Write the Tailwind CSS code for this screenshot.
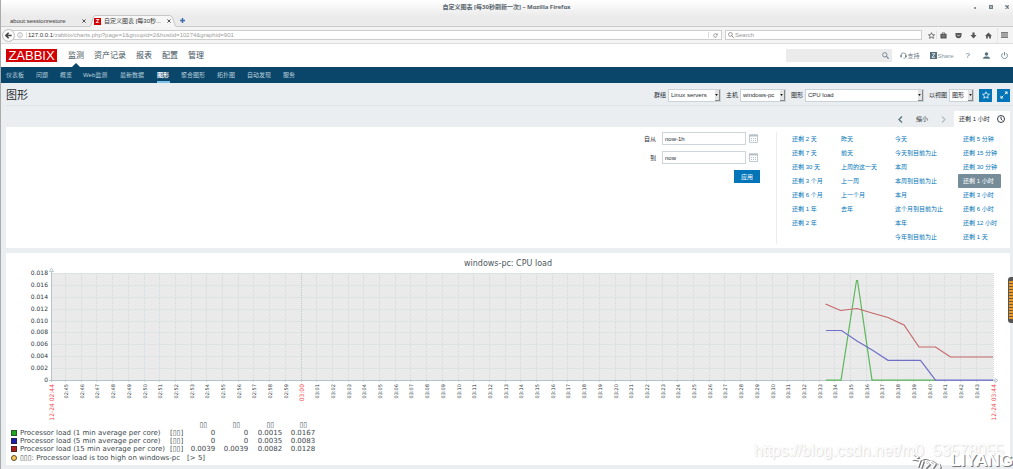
<!DOCTYPE html>
<html lang="zh-CN">
<head>
<meta charset="utf-8">
<title>自定义图表 [每30秒刷新一次]</title>
<script src="https://cdn.jsdelivr.net/npm/@tailwindcss/browser@4"></script>
</head>
<body class="relative min-h-screen overflow-x-hidden border-l border-[#a9abad] bg-[#ebeef0] font-['Liberation_Sans','Noto_Sans_CJK_SC',sans-serif] text-[6px] leading-[8px] text-[#1f2c33]">

<!-- Browser window -->
<div class="-ml-px">
  <div class="bg-linear-to-b from-white to-[#ebebeb] to-60%">
    <div class="relative flex h-[14px] items-center justify-center">
      <h2 class="font-['Noto_Sans','Noto_Sans_CJK_SC',sans-serif] text-[6px] font-bold text-[#56646c]">自定义图表 [每30秒刷新一次] – Mozilla Firefox</h2>
      <div class="absolute right-[4px] top-[5px] flex items-center gap-[12px]">
        <button aria-label="最小化" class="flex size-[4px] items-end"><span class="ml-[1px] h-[2px] w-[2px] bg-[#8b979d]"></span></button>
        <button aria-label="最大化" class="size-[4px] border border-[#6f7e85] bg-[#a9b3b8]"></button>
        <button aria-label="关闭" class="size-[4px]"><svg viewBox="0 0 4 4" class="size-[4px]"><path d="M.4.4 3.6 3.6M3.6.4.4 3.6" stroke="#65747c" stroke-width="1.3"/></svg></button>
      </div>
    </div>
    <div class="flex h-[13px] items-end border-b border-[#cbcbcb] text-[#3a3a3a]">
      <div class="flex h-[10px] w-[89px] items-center justify-between pl-[10px] pr-[3px]">
        <span>about:sessionrestore</span>
        <button aria-label="关闭标签页" class="size-[4px]"><svg viewBox="0 0 4 4" class="size-[4px]"><path d="M.4.4 3.6 3.6M3.6.4.4 3.6" stroke="#555" stroke-width="1"/></svg></button>
      </div>
      <div class="relative -mb-px flex h-[12px] w-[88px] items-center gap-[3px] pl-[5px]">
        <svg viewBox="0 0 88 13" preserveAspectRatio="none" class="absolute inset-0 size-full" fill="none"><path d="M0 13C4 12 2 .5 7 .5H80C86 .5 84 12 88 13" fill="#f6f6f6" stroke="#c4c4c4"/></svg>
        <span class="relative flex size-[7px] items-center justify-center bg-[#d40000] text-[6px] font-bold leading-[6px] text-white">Z</span>
        <span class="relative">自定义图表 [每30秒...</span>
        <button aria-label="关闭标签页" class="relative ml-auto mr-[6px] size-[4px]"><svg viewBox="0 0 4 4" class="size-[4px]"><path d="M.4.4 3.6 3.6M3.6.4.4 3.6" stroke="#555" stroke-width="1"/></svg></button>
      </div>
      <button aria-label="新标签页" class="mb-[3px] ml-[3px] size-[5px]"><svg viewBox="0 0 5 5" class="size-[5px]"><path d="M2.5 0V5M0 2.5H5" stroke="#3d6bb0" stroke-width="1.5"/></svg></button>
    </div>
  </div>

  <div class="flex h-[17px] items-center border-b border-[#dcdcdc] bg-[#f4f4f4] pl-[2px] pr-[2px]">
    <button aria-label="后退" class="relative z-10 flex size-[13px] shrink-0 items-center justify-center rounded-full border border-[#bdbdbd] bg-[#fafafa]">
      <svg viewBox="0 0 8 8" class="size-[7px]" fill="none"><path d="M4.2.8 1 4 4.2 7.2M1 4H7.6" stroke="#444" stroke-width="1.8"/></svg>
    </button>
    <div class="-ml-[4px] flex h-[10px] flex-1 items-center border border-[#cdcdcd] bg-white pl-[5px]">
      <svg viewBox="0 0 8 8" class="size-[6px]" fill="none" stroke="#999"><circle cx="4" cy="4" r="3.3" stroke-width=".8"/><path d="M4 3.4V6M4 1.9V2.7" stroke-width=".9"/></svg>
      <span class="ml-[3px] h-[6px] w-px bg-[#dcdcdc]"></span>
      <span class="pl-[1px] text-[#a0a0a0]"><span class="text-[#333]">127.0.0.1</span>/zabbix/charts.php?page=1&amp;groupid=2&amp;hostid=10274&amp;graphid=901</span>
      <button aria-label="重新加载" class="ml-auto flex h-[6px] w-[13px] items-center justify-center border-l border-[#dcdcdc]"><svg viewBox="0 0 8 8" class="size-[5px]" fill="none"><path d="M6.5 5A2.8 2.8 0 1 1 6.2 2.4" stroke="#777" stroke-width="1.1"/><path d="M7.4.5V3.6H4.3z" fill="#777"/></svg></button>
    </div>
    <label class="ml-[3px] flex h-[10px] w-[197px] items-center border border-[#cdcdcd] bg-white pl-[2px]">
      <svg viewBox="0 0 8 8" class="size-[6px]" fill="none" stroke="#777"><circle cx="3.2" cy="3.2" r="2.5"/><path d="M5 5 7.6 7.6" stroke-width="1.2"/></svg>
      <input aria-label="Search" placeholder="Search" class="ml-[1px] h-[8px] flex-1 outline-none placeholder:text-[#999]">
    </label>
    <div class="flex items-center pl-[4px]">
      <button aria-label="收藏" class="flex h-[10px] w-[10px] items-center justify-center"><svg viewBox="0 0 16 16" class="size-[7px]" fill="none"><path d="M8 1.5 10 6 15 6.5 11.200 9.800 12.400 14.500 8 12 3.600 14.500 4.800 9.800 1 6.500 6 6Z" stroke="#555" stroke-width="1.8"/></svg></button>
      <button aria-label="书签" class="flex h-[8px] w-[14px] items-center justify-center border-l border-[#e2e2e2]"><svg viewBox="0 0 16 16" class="size-[7px]"><path d="M1 4H5V1H11V4H15V15H1ZM6.500 4H9.500V2.500H6.500Z" fill="#555" fill-rule="evenodd"/><path d="M4 8H12M4 11H12" stroke="#aaa"/></svg></button>
      <button aria-label="Pocket" class="flex size-[10px] ml-[3px] items-center justify-center"><svg viewBox="0 0 16 16" class="size-[7px]" fill="none"><path d="M1 2H15V7C15 11.500 12 14.500 8 14.500S1 11.500 1 7Z" fill="#555"/><path d="M4.500 6 8 9.500 11.500 6" stroke="#f4f4f4" stroke-width="1.800"/></svg></button>
      <button aria-label="下载" class="ml-[5px] flex size-[10px] items-center justify-center"><svg viewBox="0 0 16 16" class="size-[7px]"><path d="M5.500 1H10.500V7H15L8 15 1 7H5.500Z" fill="#555"/></svg></button>
      <button aria-label="主页" class="ml-[5px] flex size-[10px] items-center justify-center"><svg viewBox="0 0 16 16" class="size-[7px]"><path d="M8 1 16 9H13.500V15H9.500V10H6.500V15H2.500V9H0Z" fill="#555"/></svg></button>
      <button aria-label="菜单" class="ml-[4px] flex h-[15px] w-[14px] items-center justify-center border-l border-[#e6e6e6]"><svg viewBox="0 0 7 6" class="h-[6px] w-[7px]"><path d="M0 .8H7M0 3H7M0 5.200H7" stroke="#555" stroke-width="1.200"/></svg></button>
    </div>
  </div>
</div>

<!-- Zabbix header -->
<header>
  <div class="flex h-[23px] items-center bg-white pl-[5px] pr-[5px]">
    <a href="#" class="flex h-[13px] w-[51px] items-center justify-center bg-[#d40000] text-[13px] leading-[13px] text-white">ZABBIX</a>
    <nav class="ml-[11px] flex gap-[10px] text-[8px] leading-[23px] text-[#3f525c]">
      <a href="#" class="relative">监测<svg viewBox="0 0 8 4" class="absolute bottom-0 left-1/2 h-[4px] w-[8px] -translate-x-1/2"><path d="M0 4 4 0 8 4Z" fill="#0a466a"/></svg></a>
      <a href="#">资产记录</a>
      <a href="#">报表</a>
      <a href="#">配置</a>
      <a href="#">管理</a>
    </nav>
    <div class="ml-auto flex items-center text-[#5f7480]">
      <label class="flex h-[13px] w-[106px] items-center bg-[#ebebeb] pr-[3px]">
        <input aria-label="搜索" class="h-[12px] w-0 flex-1 bg-transparent outline-none">
        <svg viewBox="0 0 8 8" class="size-[7px]" fill="none" stroke="#68808e"><circle cx="3.200" cy="3.200" r="2.500"/><path d="M5 5 7.600 7.600" stroke-width="1.300"/></svg>
      </label>
      <a href="#" class="ml-[8px] flex items-center gap-[1px]"><svg viewBox="0 0 16 16" class="size-[7px]" fill="none" stroke="#68808e"><path d="M2.500 10V7.500A5.500 5.500 0 0 1 13.500 7.500V10C13.500 13 11 14.500 8 14.500" stroke-width="1.800"/><path d="M2.500 7.500V12M13.500 7.500V12" stroke-width="3.400"/></svg>支持</a>
      <a href="#" class="ml-[10px] flex items-center gap-[1px] text-[#8796a0]"><svg viewBox="0 0 14 14" class="size-[7px]"><path d="M0 0H14V14H0Z" fill="#56707f"/><path d="M4 3.500H10L4 10.500H10" fill="none" stroke="#fff" stroke-width="1.600"/></svg>Share</a>
      <a href="#" class="ml-[12px] text-[8px]">?</a>
      <a href="#" aria-label="用户" class="ml-[13px]"><svg viewBox="0 0 14 14" class="size-[7px]" fill="#56707f"><circle cx="7" cy="4" r="3.500"/><path d="M0 13.500C0 10 3 9 7 9S14 10 14 13.500Z"/></svg></a>
      <a href="#" aria-label="退出" class="ml-[11px]"><svg viewBox="0 0 14 14" class="size-[7px]" fill="none" stroke="#68808e" stroke-width="1.800"><path d="M3.800 2.500A5.800 5.800 0 1 0 10.200 2.500M7 0V7"/></svg></a>
    </div>
  </div>
  <nav class="flex h-[16px] gap-[11px] bg-[#0a466a] pl-[5px] leading-[17px] text-[#b9cfdb]">
    <a href="#" class="w-[19px]">仪表板</a>
    <a href="#" class="w-[13px]">问题</a>
    <a href="#" class="w-[12px]">概览</a>
    <a href="#" class="w-[26px]">Web监测</a>
    <a href="#" class="w-[26px]">最新数据</a>
    <a href="#" class="w-[13px] border-b-2 border-[#7cc0ec] font-bold text-white">图形</a>
    <a href="#" class="w-[25px]">聚合图形</a>
    <a href="#" class="w-[19px]">拓扑图</a>
    <a href="#" class="w-[25px]">自动发现</a>
    <a href="#" class="w-[13px]">服务</a>
  </nav>
</header>

<main class="pl-[5px] pr-[3px]">
  <form class="-mr-[3px] flex h-[23px] items-center border-b border-[#dfe4e7] pr-[3px] pt-[2px]">
    <h1 class="text-[11px] leading-[14px]">图形</h1>
    <div class="ml-auto flex items-center">
      <label for="grp">群组</label>
      <span class="relative ml-[2px] flex"><select id="grp" class="h-[13px] w-[53px] appearance-none border border-[#c8d3d9] bg-white pl-[2px] outline-none"><option>Linux servers</option></select><span class="pointer-events-none absolute inset-y-[1px] right-[1px] flex w-[5px] items-center justify-center border-b border-r border-[#888] bg-[#e4e4e4]"><svg viewBox="0 0 4 3" class="h-[2px] w-[3px]"><path d="M0 0H4L2 3Z" fill="#111"/></svg></span></span>
      <label for="host" class="ml-[5px]">主机</label>
      <span class="relative ml-[2px] flex"><select id="host" class="h-[13px] w-[46px] appearance-none border border-[#c8d3d9] bg-white pl-[2px] outline-none"><option>windows-pc</option></select><span class="pointer-events-none absolute inset-y-[1px] right-[1px] flex w-[5px] items-center justify-center border-b border-r border-[#888] bg-[#e4e4e4]"><svg viewBox="0 0 4 3" class="h-[2px] w-[3px]"><path d="M0 0H4L2 3Z" fill="#111"/></svg></span></span>
      <label for="graph" class="ml-[5px]">图形</label>
      <span class="relative ml-[2px] flex"><select id="graph" class="h-[13px] w-[119px] appearance-none border border-[#c8d3d9] bg-white pl-[2px] outline-none"><option>CPU load</option></select><span class="pointer-events-none absolute inset-y-[1px] right-[1px] flex w-[5px] items-center justify-center border-b border-r border-[#888] bg-[#e4e4e4]"><svg viewBox="0 0 4 3" class="h-[2px] w-[3px]"><path d="M0 0H4L2 3Z" fill="#111"/></svg></span></span>
      <label for="view" class="ml-[5px]">以视图</label>
      <span class="relative ml-[2px] flex"><select id="view" class="h-[13px] w-[25px] appearance-none border border-[#c8d3d9] bg-white pl-[2px] outline-none"><option>图形</option></select><span class="pointer-events-none absolute inset-y-[1px] right-[1px] flex w-[5px] items-center justify-center border-b border-r border-[#888] bg-[#e4e4e4]"><svg viewBox="0 0 4 3" class="h-[2px] w-[3px]"><path d="M0 0H4L2 3Z" fill="#111"/></svg></span></span>
      <button type="button" aria-label="加入收藏" class="ml-[5px] flex size-[13px] items-center justify-center bg-[#0275b8]"><svg viewBox="0 0 16 16" class="size-[8px]" fill="none"><path d="M8 1.500 10 6 15 6.500 11.200 9.800 12.400 14.500 8 12 3.600 14.500 4.800 9.800 1 6.500 6 6Z" stroke="#fff" stroke-width="1.500"/></svg></button>
      <button type="button" aria-label="全屏" class="ml-[5px] flex size-[13px] items-center justify-center bg-[#0275b8]"><svg viewBox="0 0 16 16" class="size-[8px]"><path d="M9 1H15V7ZM1 9V15H7Z" fill="#fff"/><path d="M9.500 6.500 13 3M3 13 6.500 9.500" stroke="#fff" stroke-width="2"/></svg></button>
    </div>
  </form>

  <!-- Time range -->
  <div class="flex justify-end pt-[5px]">
    <div class="flex h-[16px] items-center">
      <button aria-label="向前" class="size-[7px]"><svg viewBox="0 0 7 7" class="size-[7px]" fill="none"><path d="M5 .5 2 3.500 5 6.500" stroke="#56707f" stroke-width="1.300"/></svg></button>
      <button class="mx-[12px]">缩小</button>
      <button aria-label="向后" class="mr-[7px] size-[7px]"><svg viewBox="0 0 7 7" class="size-[7px]" fill="none"><path d="M2 .5 5 3.500 2 6.500" stroke="#b4bfc5" stroke-width="1.300"/></svg></button>
      <a href="#" class="flex h-[16px] w-[56px] items-center justify-between bg-white px-[5px]">还剩 1 小时
        <svg viewBox="0 0 16 16" class="size-[8px]" fill="none" stroke="#1f2c33" stroke-width="1.800"><circle cx="8" cy="8" r="7"/><path d="M8 3.500V8L11 11"/></svg></a>
    </div>
  </div>
  <section class="flex justify-end bg-white pb-[4px] pt-[5px]">
    <form class="flex flex-col items-end gap-[6px] pr-[16px]">
      <div class="flex items-center"><label for="from">自从</label><input id="from" value="now-1h" class="ml-[6px] h-[13px] w-[84px] border border-[#ccd5d9] px-[2px] outline-none"><button type="button" aria-label="选择开始日期" class="ml-[3px] mr-[2px]"><svg viewBox="0 0 9 9" class="size-[9px]" fill="none"><path d="M.5 1H8.500V8.500H.5Z" fill="#fff" stroke="#c0cacf"/><path d="M0 1.500H9" stroke="#b4c0c6" stroke-width="2"/><path d="M2 4.500H7.500M2 6.500H7.500" stroke="#b4c0c6" stroke-dasharray="1 1"/></svg></button></div>
      <div class="flex items-center"><label for="to">到</label><input id="to" value="now" class="ml-[6px] h-[13px] w-[84px] border border-[#ccd5d9] px-[2px] outline-none"><button type="button" aria-label="选择结束日期" class="ml-[3px] mr-[2px]"><svg viewBox="0 0 9 9" class="size-[9px]" fill="none"><path d="M.5 1H8.500V8.500H.5Z" fill="#fff" stroke="#c0cacf"/><path d="M0 1.500H9" stroke="#b4c0c6" stroke-width="2"/><path d="M2 4.500H7.500M2 6.500H7.500" stroke="#b4c0c6" stroke-dasharray="1 1"/></svg></button></div>
      <button type="button" class="h-[13px] w-[26px] bg-[#0275b8] text-white">应用</button>
    </form>
    <div class="grid grid-cols-[49px_54px_63px_52px] border-l border-[#ebeef0] pl-[15px] text-[#0275b8]">
      <div class="flex flex-col items-start leading-[14px]"><a href="#">还剩 2 天</a><a href="#">还剩 7 天</a><a href="#">还剩 30 天</a><a href="#">还剩 3 个月</a><a href="#">还剩 6 个月</a><a href="#">还剩 1 年</a><a href="#">还剩 2 年</a></div>
      <div class="flex flex-col items-start leading-[14px]"><a href="#">昨天</a><a href="#">前天</a><a href="#">上周的这一天</a><a href="#">上一周</a><a href="#">上一个月</a><a href="#">去年</a></div>
      <div class="flex flex-col items-start leading-[14px]"><a href="#">今天</a><a href="#">今天到目前为止</a><a href="#">本周</a><a href="#">本周到目前为止</a><a href="#">本月</a><a href="#">这个月到目前为止</a><a href="#">本年</a><a href="#">今年到目前为止</a></div>
      <div class="flex flex-col items-start leading-[14px]"><a href="#" class="px-[5px]">还剩 5 分钟</a><a href="#" class="px-[5px]">还剩 15 分钟</a><a href="#" class="px-[5px]">还剩 30 分钟</a><a href="#" class="h-[14px] w-[43px] rounded-[1px] bg-[#768d99] px-[5px] text-white">还剩 1 小时</a><a href="#" class="px-[5px]">还剩 3 小时</a><a href="#" class="px-[5px]">还剩 6 小时</a><a href="#" class="px-[5px]">还剩 12 小时</a><a href="#" class="px-[5px]">还剩 1 天</a></div>
    </div>
  </section>

  <!-- Graph -->
  <section class="mb-[4px] mt-[5px] bg-white pb-[3px] font-['DejaVu_Sans','Noto_Sans_CJK_SC',sans-serif] text-[#3c484e]">
    <svg id="plot" viewBox="0 0 1004 168" class="block h-auto w-full" role="img" aria-label="windows-pc: CPU load">
      <text x="502" y="13" text-anchor="middle" class="fill-[#4a565c] text-[8px]">windows-pc: CPU load</text>
      <rect x="46" y="20" width="941" height="107" fill="#eaeaea"/>
      <g id="grid" stroke="#d3dadd" stroke-dasharray="1 1"></g>
      <path d="M45.500 17V129M43 127.500H990" stroke="#b4c3cc" fill="none"/>
      <path d="M43.500 18.500 45.500 15 47.500 18.500ZM989 125.500 992 127.500 989 129.500Z" fill="#fff" stroke="#9fb1bb" stroke-width=".7"/>
      <g id="labels" class="fill-[#2b363b]"></g>
      <g fill="none" stroke-width="1.200">
        <path d="M820 127.200H835L850.500 27.500H851.500L866 127.200H930" stroke="#5cb85c"/>
        <path d="M820 77.500H835.500L851 88 867 97.500 882 107.300H914.500L929.500 127.200H987" stroke="#6f6fc8"/>
        <path d="M819.500 51 834.500 57.500 851 55.500 866 60 882 64.500 898 72 913 94H929.500L944.500 104H987" stroke="#c36868"/>
      </g>
    </svg>
    <table class="ml-[5px] border-collapse text-[7px] leading-[8px]">
      <thead><tr><th></th><th class="w-[150px]"></th><th class="w-[13px]"></th><th class="w-[32px] p-0 pr-[8px] text-right font-normal">▯▯</th><th class="w-[33px] p-0 pr-[8px] text-right font-normal">▯▯</th><th class="w-[34px] p-0 pr-[8px] text-right font-normal">▯▯</th><th class="w-[33px] p-0 pr-[8px] text-right font-normal">▯▯</th></tr></thead>
      <tbody class="text-right">
        <tr><td class="p-0"><span class="mr-[3px] block size-[6px] border border-[#2a5a2a] bg-[#1fa51f]"></span></td><td class="p-0 text-left">Processor load (1 min average per core)</td><td class="p-0 text-left">[▯▯]</td><td class="p-0">0</td><td class="p-0">0</td><td class="p-0">0.0015</td><td class="p-0">0.0167</td></tr>
        <tr><td class="p-0"><span class="mr-[3px] block size-[6px] border border-[#22225a] bg-[#1f1fa8]"></span></td><td class="p-0 text-left">Processor load (5 min average per core)</td><td class="p-0 text-left">[▯▯]</td><td class="p-0">0</td><td class="p-0">0</td><td class="p-0">0.0035</td><td class="p-0">0.0083</td></tr>
        <tr><td class="p-0"><span class="mr-[3px] block size-[6px] border border-[#5a2222] bg-[#a81f1f]"></span></td><td class="p-0 text-left">Processor load (15 min average per core)</td><td class="p-0 text-left">[▯▯]</td><td class="p-0">0.0039</td><td class="p-0">0.0039</td><td class="p-0">0.0082</td><td class="p-0">0.0128</td></tr>
      </tbody>
    </table>
    <p class="ml-[5px] mt-[1px] flex items-center text-[7px] leading-[8px]"><span class="mr-[3px] size-[6px] rounded-full border border-[#5a4a2a] bg-[#ffc859]"></span>▯▯▯: Processor load is too high on windows-pc<span class="ml-[7px]">[&gt; 5]</span></p>
  </section>
</main>

<!-- Page-edge slider and blog marks -->
<div class="absolute right-0 top-[277px] h-[46px] w-[5px] rounded-l-[3px] border-y-4 border-l border-[#555] bg-[repeating-linear-gradient(#e89a2c_0_2px,#7a5a2c_2px_3px)]"></div>
<div class="absolute right-[9px] top-[441px] font-['Liberation_Sans',sans-serif] text-[16px] leading-[20px] text-white [text-shadow:1px_1px_1px_#dcdcdc,0_0_1px_#e0e0e0]">https://blog.csdn.net/m0_53578055</div>
<svg viewBox="0 0 32 16" class="absolute right-[69px] top-[453px] h-[16px] w-[32px]" fill="none" stroke-linecap="round">
  <path d="M3 2 7 5 3 7 9 8 7 14M9 8 14 6 22 8 28 12 29 15M12 9 10 15M15 9 18 12 15 15M20 9 24 12 22 15" stroke="#777" stroke-width="1.800"/>
  <path d="M2 1 6 4 2 6 8 7 6 13M8 7 13 5 21 7 27 11 28 14M11 8 9 14M14 8 17 11 14 14M19 8 23 11 21 14" stroke="#fff" stroke-width="1.400"/>
</svg>
<div class="absolute right-0 top-[452px] font-['Liberation_Sans',sans-serif] text-[17px] font-bold leading-[17px] text-white [text-shadow:1px_1px_0_#777]">LIYANG</div>

<script>
  const NS = 'http://www.w3.org/2000/svg';
  const LEFT = 45.5, TOP = 20, BOTTOM = 127, RIGHT = 987.5;
  const add = (parent, name, attrs, text) => {
    const el = document.createElementNS(NS, name);
    for (const k in attrs) el.setAttribute(k, attrs[k]);
    if (text) el.textContent = text;
    parent.appendChild(el);
  };
  const grid = document.getElementById('grid');
  const labels = document.getElementById('labels');

  for (let i = 0; i <= 9; i++) {
    const y = Math.round(BOTTOM - i * (BOTTOM - TOP) / 9);
    if (i) add(grid, 'line', { x1: LEFT, x2: RIGHT, y1: y + .5, y2: y + .5 });
    add(labels, 'text', { x: 42, y: y + 2, 'text-anchor': 'end', class: 'text-[6px]' }, i ? (i * 0.002).toFixed(3) : '0');
  }

  const vertical = (x, text, cls) =>
    add(labels, 'text', { transform: `translate(${x + 2} 131) rotate(-90)`, 'text-anchor': 'end', class: cls }, text);

  vertical(LEFT, '12-24 02:44', 'fill-[#f04848] text-[6px]');
  for (let m = 45; m < 104; m++) {
    const x = Math.round(59 + (m - 45) * 15.7) + .5;
    const hour = m === 60;
    add(grid, 'line', { x1: x, x2: x, y1: TOP, y2: BOTTOM + 2, stroke: hour ? '#bcc6cb' : '#d3dadd' });
    const text = (m < 60 ? '02:' : '03:') + String(m % 60).padStart(2, '0');
    vertical(x, text, hour ? 'fill-[#f04848] text-[6px]' : 'text-[5px]');
  }
  add(grid, 'line', { x1: RIGHT, x2: RIGHT, y1: TOP, y2: BOTTOM });
  vertical(RIGHT, '12-24 03:44', 'fill-[#f04848] text-[6px]');
</script>
</body>
</html>
